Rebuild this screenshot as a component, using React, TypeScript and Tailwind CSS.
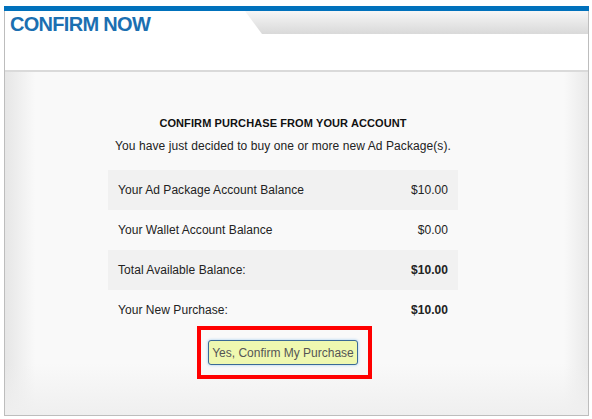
import React from 'react';

type Row = {
  label: string;
  amount: string;
  bold?: boolean;
  shaded?: boolean;
};

const rows: Row[] = [
  { label: 'Your Ad Package Account Balance', amount: '$10.00', shaded: true },
  { label: 'Your Wallet Account Balance', amount: '$0.00' },
  { label: 'Total Available Balance:', amount: '$10.00', bold: true, shaded: true },
  { label: 'Your New Purchase:', amount: '$10.00', bold: true },
];

export default function App() {
  return (
    <div className="w-[592px] h-[419px] bg-white pt-[6px] pl-[4px] font-['Liberation_Sans',Arial,sans-serif] text-[#222]">
      <div className="w-[585px] h-[410px] flex flex-col border-x border-b border-[#bdbdbd]">
        {/* top blue strip */}
        <div className="h-[5px] bg-[#0071bc] -mx-px" />

        {/* header row with tab */}
        <div className="h-[23px] flex">
          <div className="w-[240px] bg-white pl-[5px]">
            <h1 className="mt-[2px] text-[20px] leading-[23px] font-bold tracking-[-0.7px] text-[#1b6fb1] whitespace-nowrap">
              CONFIRM NOW
            </h1>
          </div>
          <div className="flex-1 bg-[linear-gradient(to_bottom,#f6f6f6,#d9d9d9)] [clip-path:polygon(0_0,100%_0,100%_100%,17px_100%)]" />
        </div>

        <div className="h-[36px] bg-white" />
        <div className="h-[2px] bg-[#dadada]" />

        {/* content */}
        <div className="flex-1 [background-image:linear-gradient(to_bottom,transparent_85%,#efefef),linear-gradient(to_right,#e6e6e6,#f9f9f9_30px,#f9f9f9_calc(100%-24px),#e9e9e9)]">
          <div className="ml-[103px] w-[350px] pt-[44px] flex flex-col">
            <p className="text-center text-[11px] leading-[15px] font-bold tracking-[0.1px] text-[#111]">
              CONFIRM PURCHASE FROM YOUR ACCOUNT
            </p>
            <p className="mt-[8px] text-center text-[12px] leading-[15px] tracking-[0.08px] text-[#222] whitespace-nowrap">
              You have just decided to buy one or more new Ad Package(s).
            </p>

            <div className="mt-[16px] flex flex-col">
              {rows.map((row) => (
                <div
                  key={row.label}
                  className={`h-[40px] flex items-center justify-between px-[10px] text-[12px] tracking-[0.05px] ${
                    row.shaded ? 'bg-[#f1f1f1]' : ''
                  }`}
                >
                  <span>{row.label}</span>
                  <span className={row.bold ? 'font-bold' : ''}>{row.amount}</span>
                </div>
              ))}
            </div>

            <div className="-mt-[4px] flex justify-center">
              <div className="ml-[3px] w-[175px] h-[53px] border-4 border-[#ff0000] flex items-center justify-center pr-[3px]">
                <button className="w-[150px] h-[25px] rounded-[3px] border border-[#3b6a96] bg-[#eff8b0] shadow-[0_0_3px_#9cc8ee] text-[12px] text-[#555] whitespace-nowrap">
                  Yes, Confirm My Purchase
                </button>
              </div>
            </div>
          </div>
        </div>
      </div>
    </div>
  );
}
